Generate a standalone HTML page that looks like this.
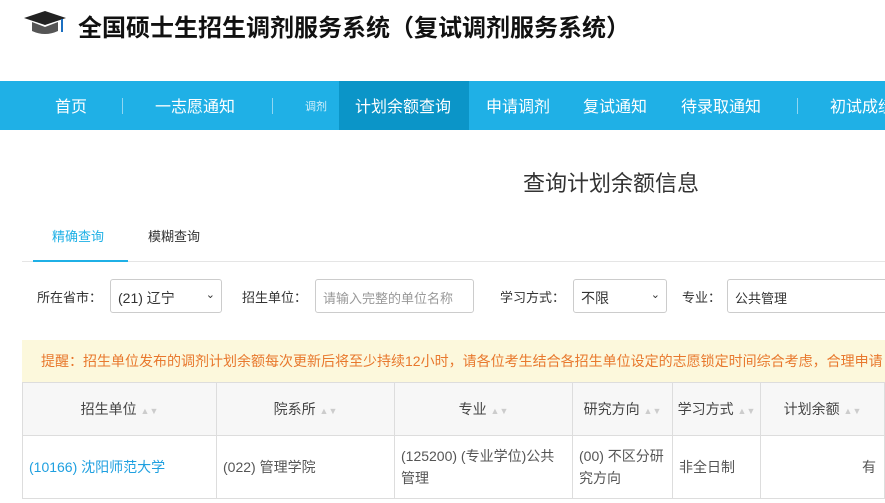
<!DOCTYPE html>
<html><head><meta charset="utf-8"><style>
*{margin:0;padding:0;box-sizing:border-box}
body{width:885px;height:503px;overflow:hidden;background:#fff;font-family:"Liberation Sans","Noto Sans CJK SC",sans-serif;position:relative;color:#333}
.a{position:absolute;white-space:nowrap}
.nav{position:absolute;left:0;top:81px;width:885px;height:49px;background:#1fb0e6}
.nav .a{color:#fff;font-size:16px;top:12px}
.sep{position:absolute;top:17px;width:1px;height:16px;background:#8fd6f2}
.sel{position:absolute;height:34px;border:1px solid #ccc;border-radius:3px;background:#fff;font-size:14px;padding:8px 7px;color:#333}
table{position:absolute;left:22px;top:382px;border-collapse:collapse;font-size:14px}
td,th{border:1px solid #ddd;font-weight:normal}
th{background:#f7f7f7;height:53px;text-align:center;color:#444}
td{height:63px;padding:0 6px;line-height:22px;color:#555}
.s{color:#ccc;font-size:9px}
</style></head><body>
<svg class="a" style="left:22px;top:10px" width="46" height="26" viewBox="0 0 46 26"><polygon points="2,8 23,1 44,8 23,15" fill="#222"/><path d="M10,12 L10,21 Q23,27 36,21 L36,12 L23,17Z" fill="#555"/><line x1="40" y1="9" x2="40" y2="22" stroke="#1b6fc1" stroke-width="2"/></svg>
<div class="a" style="left:78px;top:8px;font-size:24px;font-weight:bold;color:#111">全国硕士生招生调剂服务系统（复试调剂服务系统）</div>
<div class="nav">
<div style="position:absolute;left:339px;top:0;width:130px;height:49px;background:#0b95c8"></div>
<div class="a" style="left:55px">首页</div><div class="sep" style="left:122px"></div>
<div class="a" style="left:155px">一志愿通知</div><div class="sep" style="left:272px"></div>
<div class="a" style="left:305px;font-size:11px;top:17px;color:#d5f0fb">调剂</div>
<div class="a" style="left:355px">计划余额查询</div>
<div class="a" style="left:486px">申请调剂</div>
<div class="a" style="left:583px">复试通知</div>
<div class="a" style="left:681px">待录取通知</div><div class="sep" style="left:797px"></div>
<div class="a" style="left:830px">初试成绩</div>
</div>
<div class="a" style="left:523px;top:166px;font-size:22px;color:#333">查询计划余额信息</div>
<div class="a" style="left:52px;top:226px;font-size:13px;color:#1fb0e6">精确查询</div>
<div class="a" style="left:148px;top:226px;font-size:13px;color:#333">模糊查询</div>
<div style="position:absolute;left:22px;top:261px;width:863px;height:1px;background:#e5e5e5"></div>
<div style="position:absolute;left:33px;top:260px;width:95px;height:2px;background:#1fb0e6"></div>
<div class="a" style="left:37px;top:287px;font-size:13px">所在省市：</div>
<div class="sel" style="left:110px;top:279px;width:112px">(21) 辽宁<span style="position:absolute;right:6px;top:8px;font-size:11px">&#8964;</span></div>
<div class="a" style="left:242px;top:287px;font-size:13px">招生单位：</div>
<div class="sel" style="left:315px;top:279px;width:159px;color:#999;font-size:13px">请输入完整的单位名称</div>
<div class="a" style="left:500px;top:287px;font-size:13px">学习方式：</div>
<div class="sel" style="left:573px;top:279px;width:94px">不限<span style="position:absolute;right:6px;top:8px;font-size:11px">&#8964;</span></div>
<div class="a" style="left:682px;top:287px;font-size:13px">专业：</div>
<div class="sel" style="left:727px;top:279px;width:170px;font-size:13px">公共管理</div>
<div style="position:absolute;left:22px;top:340px;width:863px;height:42px;background:#fcf8dc"></div>
<div class="a" style="left:41px;top:351px;font-size:14px;color:#e8782d">提醒：招生单位发布的调剂计划余额每次更新后将至少持续12小时，请各位考生结合各招生单位设定的志愿锁定时间综合考虑，合理申请</div>
<table>
<tr><th style="width:194px">招生单位 <span class="s">▲▼</span></th><th style="width:178px">院系所 <span class="s">▲▼</span></th><th style="width:178px">专业 <span class="s">▲▼</span></th><th style="width:100px">研究方向 <span class="s">▲▼</span></th><th style="width:88px">学习方式 <span class="s">▲▼</span></th><th style="width:124px">计划余额 <span class="s">▲▼</span></th></tr>
<tr><td style="color:#1fa0e0">(10166) 沈阳师范大学</td><td>(022) 管理学院</td><td>(125200) (专业学位)公共管理</td><td>(00) 不区分研究方向</td><td>非全日制</td><td style="text-align:right;padding-right:8px">有</td></tr>
</table>
</body></html>
